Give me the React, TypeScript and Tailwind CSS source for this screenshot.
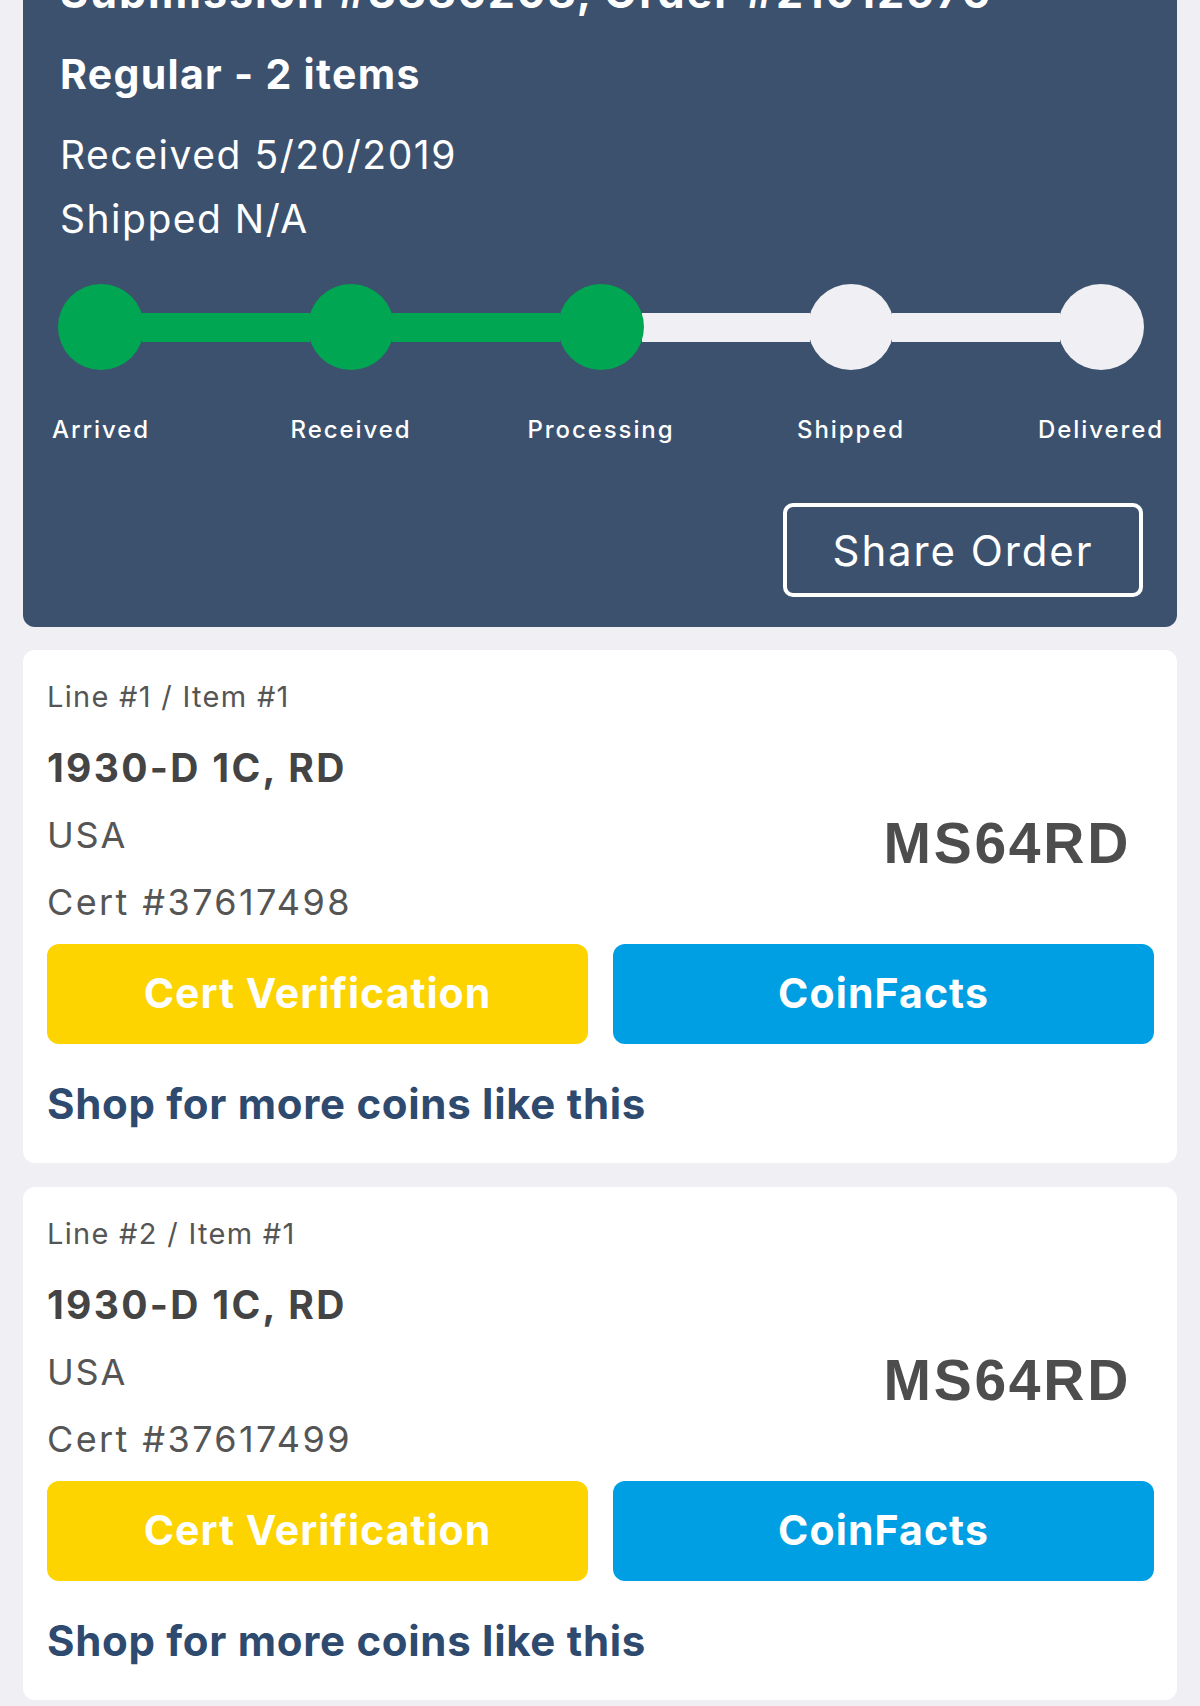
const steps = [
  { label: 'Arrived', done: true },
  { label: 'Received', done: true },
  { label: 'Processing', done: true },
  { label: 'Shipped', done: false },
  { label: 'Delivered', done: false },
]

const items = [
  { line: 'Line #1 / Item #1', cert: 'Cert #37617498' },
  { line: 'Line #2 / Item #1', cert: 'Cert #37617499' },
]

function Progress() {
  return (
    <div className="ml-[35px] mr-[33px]">
      <div className="mt-[40px] flex h-[86px] items-center">
        {steps.map((s, i) => (
          <div key={s.label} className={i === 0 ? 'flex items-center' : 'flex flex-1 items-center'}>
            {i > 0 && (
              <div
                className={
                  s.done
                    ? '-mx-[2px] h-[29px] flex-1 bg-[#00a651]'
                    : '-mx-[2px] h-[29px] flex-1 bg-[#efeff4]'
                }
              />
            )}
            <div
              className={
                s.done
                  ? 'relative h-[86px] w-[86px] rounded-full bg-[#00a651]'
                  : 'relative h-[86px] w-[86px] rounded-full bg-[#efeff4]'
              }
            />
          </div>
        ))}
      </div>
      <div className="mt-[45px] flex justify-between">
        {steps.map((s) => (
          <div key={s.label} className="flex w-[86px] justify-center">
            <span className="whitespace-nowrap text-[24px] font-medium leading-[30px] tracking-[1.9px] text-white">
              {s.label}
            </span>
          </div>
        ))}
      </div>
    </div>
  )
}

function ItemCard({ line, cert }: { line: string; cert: string }) {
  return (
    <div className="rounded-[12px] bg-white pb-[34px] pl-[24px] pr-[23px] pt-[29px]">
      <p className="text-[29px] leading-[36px] tracking-[1.3px] text-[#555]">{line}</p>
      <p className="mt-[30px] text-[39px] font-bold leading-[46px] tracking-[2.3px] text-[#444]">
        1930-D 1C, RD
      </p>
      <div className="flex items-start justify-between">
        <div>
          <p className="mt-[22px] text-[36px] leading-[44px] tracking-[1.8px] text-[#555]">USA</p>
          <p className="mt-[23px] text-[36px] leading-[44px] tracking-[2.4px] text-[#555]">{cert}</p>
        </div>
        <p className="mr-[23px] mt-[20px] font-['Liberation_Sans',Arial,sans-serif] text-[57px] font-bold leading-[64px] tracking-[2.7px] text-[#4d4d4d]">
          MS64RD
        </p>
      </div>
      <div className="mt-[20px] grid grid-cols-2 gap-[25px]">
        <button className="flex h-[100px] items-center justify-center rounded-[12px] bg-[#fdd300] text-[41px] font-bold tracking-[1px] text-white">
          Cert Verification
        </button>
        <button className="flex h-[100px] items-center justify-center rounded-[12px] bg-[#009fe3] text-[41px] font-bold tracking-[1.1px] text-white">
          CoinFacts
        </button>
      </div>
      <p className="mt-[35px] text-[42px] font-bold leading-[50px] tracking-[0.7px] text-[#2f4a6f]">
        Shop for more coins like this
      </p>
    </div>
  )
}

export default function App() {
  return (
    <div className="min-h-[1706px] bg-[#efeff4] px-[23px] pb-[6px] font-['Inter',sans-serif] [&_p]:whitespace-nowrap">
      <div className="-mt-[40px] rounded-[12px] bg-[#3c516d] pb-[30px]">
        <div className="pl-[37px] text-white">
          <p className="text-[43px] font-bold leading-[64px] tracking-[2px]">Submission #3886208, Order #21012576</p>
          <p className="mt-[25px] text-[41px] font-bold leading-[50px] tracking-[1.3px]">Regular - 2 items</p>
          <p className="mt-[31px] text-[39px] leading-[50px] tracking-[1.55px]">Received 5/20/2019</p>
          <p className="mt-[14px] text-[39px] leading-[50px] tracking-[1.5px]">Shipped N/A</p>
        </div>
        <Progress />
        <div className="mt-[58px] flex justify-end pr-[34px]">
          <button className="flex h-[94px] w-[360px] items-center justify-center rounded-[10px] border-4 border-white text-[42px] tracking-[1.9px] text-white">
            Share Order
          </button>
        </div>
      </div>
      <div className="mt-[23px]">
        <ItemCard line={items[0].line} cert={items[0].cert} />
      </div>
      <div className="mt-[24px]">
        <ItemCard line={items[1].line} cert={items[1].cert} />
      </div>
    </div>
  )
}
